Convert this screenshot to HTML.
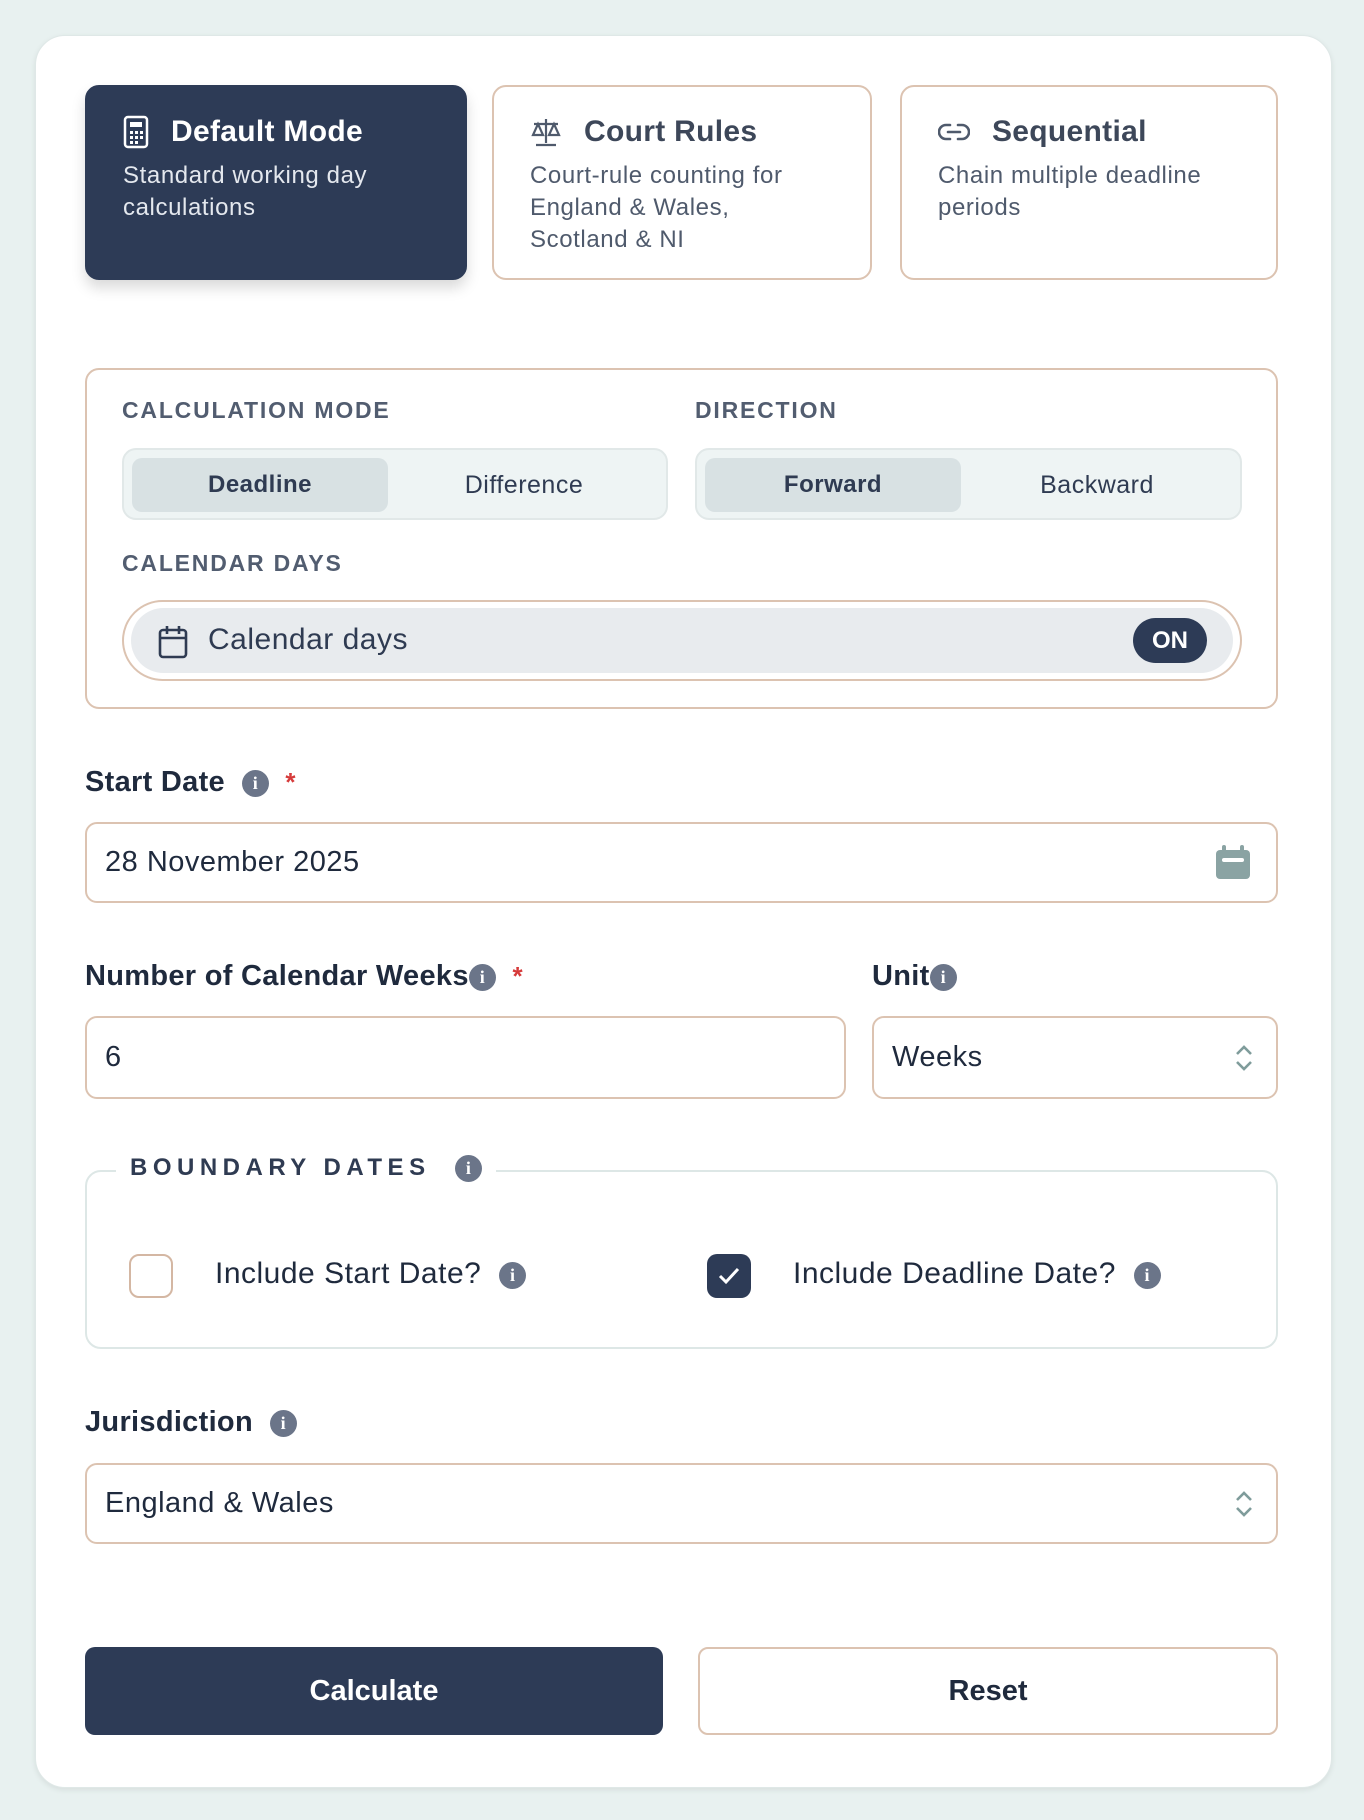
<!DOCTYPE html>
<html><head><meta charset="utf-8"><style>
*{box-sizing:border-box;margin:0;padding:0}
body{width:1364px;height:1820px;background:#e8f1f0;font-family:"Liberation Sans",sans-serif;color:#1f2a3d;position:relative;overflow:hidden}
.a{position:absolute}
.card{left:35px;top:35px;width:1297px;height:1753px;background:#fff;border-radius:30px;box-shadow:0 2px 6px rgba(0,0,0,.08);border:1px solid #dfe8e7}
.mc{top:85px;height:195px;border:2px solid #dcc3b1;border-radius:14px;background:#fff}
.mc h3{position:absolute;left:36px;top:28px;font-size:30px;font-weight:bold;color:#3d4759;display:flex;align-items:center;gap:22px;letter-spacing:.3px}
.mc p{position:absolute;left:36px;top:73px;font-size:24px;line-height:32px;color:#4f5a6c;letter-spacing:.6px}
.lbl{font-size:23px;font-weight:bold;letter-spacing:1.8px;color:#525d70}
.seg{top:448px;height:72px;border:2px solid #e1e8e8;border-radius:14px;background:#eef4f4}
.seg div{position:absolute;top:8px;height:54px;width:256px;display:flex;align-items:center;justify-content:center;font-size:24px;font-weight:bold;color:#2f3b52;border-radius:10px;letter-spacing:.5px}
.fl{font-size:29px;font-weight:bold;color:#1f2a3d;letter-spacing:.3px}
.inp{border:2px solid #dcc3b1;border-radius:12px;background:#fff;font-size:29px;color:#1f2a3d;padding-left:18px;display:flex;align-items:center;letter-spacing:.5px}
.i{display:inline-block;width:27px;height:27px;border-radius:50%;background:#6b7589;color:#fff;font:bold 18px/27px "Liberation Serif",serif;text-align:center;vertical-align:middle;letter-spacing:0}
.star{color:#d63b3b;font-size:26px}
</style></head><body>
<div class="a card"></div>

<div class="a mc" style="left:85px;width:382px;background:#2d3b56;border-color:#2d3b56;box-shadow:0 8px 14px rgba(0,0,0,.15)">
<h3 style="color:#fff"><svg width="26" height="34" viewBox="0 0 26 34"><rect x="2" y="2" width="22" height="30" rx="3" fill="none" stroke="#fff" stroke-width="2.5"/><rect x="7" y="7" width="12" height="5" fill="#fff"/><g fill="#fff"><rect x="7" y="16" width="3" height="3"/><rect x="12" y="16" width="3" height="3"/><rect x="17" y="16" width="3" height="3"/><rect x="7" y="21" width="3" height="3"/><rect x="12" y="21" width="3" height="3"/><rect x="17" y="21" width="3" height="3"/><rect x="7" y="26" width="3" height="3"/><rect x="12" y="26" width="3" height="3"/></g></svg>Default Mode</h3>
<p style="color:#e4e8ee">Standard working day<br>calculations</p></div>

<div class="a mc" style="left:492px;width:380px">
<h3><svg width="32" height="30" viewBox="0 0 32 30" fill="none" stroke="#4f5a6c" stroke-width="2.2"><path d="M16 2v24M6 28h20M4 7h24M8 7l-5 11h10zM24 7l-5 11h10z"/></svg>Court Rules</h3>
<p>Court-rule counting for<br>England &amp; Wales,<br>Scotland &amp; NI</p></div>

<div class="a mc" style="left:900px;width:378px">
<h3><svg width="32" height="22" viewBox="0 0 32 22" fill="none" stroke="#4f5a6c" stroke-width="2.6" stroke-linecap="round"><path d="M12 4H8a7 7 0 0 0 0 14h4M20 4h4a7 7 0 0 1 0 14h-4M10 11h12"/></svg>Sequential</h3>
<p>Chain multiple deadline<br>periods</p></div>

<div class="a" style="left:85px;top:368px;width:1193px;height:341px;border:2px solid #dcc3b1;border-radius:14px"></div>
<div class="a lbl" style="left:122px;top:397px">CALCULATION MODE</div>
<div class="a lbl" style="left:695px;top:397px">DIRECTION</div>
<div class="a seg" style="left:122px;width:546px"><div style="left:8px;background:#d8e1e3">Deadline</div><div style="left:272px;font-weight:normal;font-size:25px">Difference</div></div>
<div class="a seg" style="left:695px;width:547px"><div style="left:8px;background:#d8e1e3">Forward</div><div style="left:272px;font-weight:normal;font-size:25px">Backward</div></div>
<div class="a lbl" style="left:122px;top:550px">CALENDAR DAYS</div>
<div class="a" style="left:122px;top:600px;width:1120px;height:81px;border:2px solid #dcc3b1;border-radius:41px"></div>
<div class="a" style="left:131px;top:608px;width:1102px;height:65px;background:#e8ebee;border-radius:33px"></div>
<svg class="a" style="left:158px;top:625px" width="30" height="34" viewBox="0 0 30 34" fill="none" stroke="#2f3b52" stroke-width="2.6"><rect x="2" y="5" width="26" height="27" rx="3"/><path d="M2 13h26M9 1v8M21 1v8"/></svg>
<div class="a" style="left:208px;top:623px;font-size:30px;color:#2f3b52;letter-spacing:.5px">Calendar days</div>
<div class="a" style="left:1133px;top:618px;width:74px;height:45px;border-radius:23px;background:#2d3b56;color:#fff;font-weight:bold;font-size:24px;text-align:center;line-height:45px">ON</div>

<div class="a fl" style="left:85px;top:766px">Start Date &nbsp;<span class="i">i</span> &nbsp;<span class="star">*</span></div>
<div class="a inp" style="left:85px;top:822px;width:1193px;height:81px">28 November 2025</div>
<svg class="a" style="left:1215px;top:845px" width="36" height="35" viewBox="0 0 36 35"><rect x="1" y="5" width="34" height="29" rx="4" fill="#8aa3a3"/><rect x="7" y="0" width="4" height="8" rx="2" fill="#8aa3a3"/><rect x="25" y="0" width="4" height="8" rx="2" fill="#8aa3a3"/><rect x="7" y="13" width="22" height="4" rx="2" fill="#fff"/></svg>

<div class="a fl" style="left:85px;top:960px">Number of Calendar Weeks<span class="i">i</span> &nbsp;<span class="star">*</span></div>
<div class="a fl" style="left:872px;top:960px">Unit<span class="i">i</span></div>
<div class="a inp" style="left:85px;top:1016px;width:761px;height:83px">6</div>
<div class="a inp" style="left:872px;top:1016px;width:406px;height:83px">Weeks</div>
<svg class="a" style="left:1233px;top:1043px" width="22" height="30" viewBox="0 0 22 30" fill="none" stroke="#7f9c9b" stroke-width="2.6"><path d="M4 11l7-7 7 7M4 19l7 7 7-7"/></svg>

<div class="a" style="left:85px;top:1170px;width:1193px;height:179px;border:2px solid #dde7e6;border-radius:16px"></div>
<div class="a" style="left:116px;top:1148px;background:#fff;padding:0 14px;font-size:24px;font-weight:bold;letter-spacing:5.5px;color:#2f3b52;line-height:40px">BOUNDARY DATES &nbsp;<span class="i">i</span></div>
<div class="a" style="left:129px;top:1254px;width:44px;height:44px;border:2px solid #d4b7a3;border-radius:10px"></div>
<div class="a" style="left:215px;top:1257px;font-size:30px;color:#1f2a3d;letter-spacing:.5px">Include Start Date? &nbsp;<span class="i">i</span></div>
<div class="a" style="left:707px;top:1254px;width:44px;height:44px;background:#2d3b56;border-radius:10px"><svg width="44" height="44" viewBox="0 0 44 44" fill="none" stroke="#fff" stroke-width="3"><path d="M13 22l6 6 12-13"/></svg></div>
<div class="a" style="left:793px;top:1257px;font-size:30px;color:#1f2a3d;letter-spacing:.5px">Include Deadline Date? &nbsp;<span class="i">i</span></div>

<div class="a fl" style="left:85px;top:1406px">Jurisdiction &nbsp;<span class="i">i</span></div>
<div class="a inp" style="left:85px;top:1463px;width:1193px;height:81px">England &amp; Wales</div>
<svg class="a" style="left:1233px;top:1489px" width="22" height="30" viewBox="0 0 22 30" fill="none" stroke="#7f9c9b" stroke-width="2.6"><path d="M4 11l7-7 7 7M4 19l7 7 7-7"/></svg>

<div class="a" style="left:85px;top:1647px;width:578px;height:88px;background:#2d3b56;border-radius:10px;color:#fff;font-size:29px;font-weight:bold;text-align:center;line-height:88px">Calculate</div>
<div class="a" style="left:698px;top:1647px;width:580px;height:88px;border:2px solid #dcc3b1;border-radius:10px;color:#1f2a3d;font-size:29px;font-weight:bold;text-align:center;line-height:84px">Reset</div>
</body></html>
